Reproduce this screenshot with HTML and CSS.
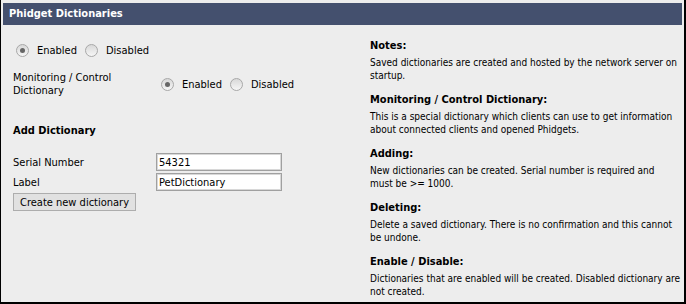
FILE: index.html
```html
<!DOCTYPE html>
<html lang="en">
<head>
    <meta charset="UTF-8">
    <title>Phidget Dictionaries</title>
    <link rel="stylesheet" href="styles.css">
</head>
<body>
    <div class="panel">
        <div class="panel-title">Phidget Dictionaries</div>
        <div class="panel-body">
            <div class="left">
                <div class="radio-row">
                    <label><input type="radio" name="enabled" checked> Enabled</label>
                    <label><input type="radio" name="enabled"> Disabled</label>
                </div>
                <div class="setting">
                    <div class="setting-label">Monitoring / Control Dictionary</div>
                    <div class="radio-row">
                        <label><input type="radio" name="monitor" checked> Enabled</label>
                        <label><input type="radio" name="monitor"> Disabled</label>
                    </div>
                </div>

                <h3>Add Dictionary</h3>
                <form id="addForm">
                    <div class="field">
                        <label for="serial">Serial Number</label>
                        <input type="text" id="serial" value="54321">
                    </div>
                    <div class="field">
                        <label for="label">Label</label>
                        <input type="text" id="label" value="PetDictionary">
                    </div>
                    <button type="submit">Create new dictionary</button>
                </form>
            </div>
            <div class="notes">
                <div class="note">
                    <h4>Notes:</h4>
                    <p>Saved dictionaries are created and hosted by the network server on startup.</p>
                </div>
                <div class="note">
                    <h4>Monitoring / Control Dictionary:</h4>
                    <p>This is a special dictionary which clients can use to get information about connected clients and opened Phidgets.</p>
                </div>
                <div class="note">
                    <h4>Adding:</h4>
                    <p>New dictionaries can be created. Serial number is required and <span class="keep">must be</span> &gt;= 1000.</p>
                </div>
                <div class="note">
                    <h4>Deleting:</h4>
                    <p>Delete a saved dictionary. There is no confirmation and this cannot be undone.</p>
                </div>
                <div class="note">
                    <h4>Enable / Disable:</h4>
                    <p>Dictionaries that are enabled will be created. Disabled dictionary are not created.</p>
                </div>
            </div>
        </div>
    </div>
</body>
</html>
```

FILE: styles.css
```css
body {
    margin: 0;
    font-family: "DejaVu Sans Condensed", "DejaVu Sans", sans-serif;
    color: #000;
    background: #fff;
}
.panel {
    width: 686px;
    height: 304px;
    box-sizing: border-box;
    background: #ededed;
    border: 2px solid #000;
    border-top: none;
    border-left-width: 1px;
    padding: 3px 2px 0 2px;
    overflow: hidden;
}
.panel-title {
    background: #44506e;
    color: #fff;
    font-weight: bold;
    font-size: 11px;
    height: 22px;
    line-height: 22px;
    padding-left: 6px;
}
.panel-body {
    display: flex;
}
.left {
    width: 367px;
    padding-left: 10px;
    box-sizing: border-box;
    font-size: 11px;
}
.radio-row {
    display: flex;
    align-items: center;
    gap: 8px;
}
.radio-row label {
    display: flex;
    align-items: center;
}
.left > .radio-row {
    margin-top: 19px;
    margin-left: 3px;
}
input[type="radio"] {
    appearance: none;
    width: 13px;
    height: 13px;
    margin: 0 8px 0 0;
    border: 1px solid #a8a8a8;
    border-radius: 50%;
    background: linear-gradient(#d8d8d8, #f6f6f6);
    position: relative;
}
input[type="radio"]:checked::after {
    content: "";
    position: absolute;
    left: 3px;
    top: 3px;
    width: 5px;
    height: 5px;
    border-radius: 50%;
    background: #666;
}
.setting {
    display: flex;
    align-items: center;
    margin-top: 14px;
}
.setting-label {
    width: 148px;
    line-height: 13px;
}
h3 {
    font-size: 11px;
    margin: 27px 0 16px;
}
.field {
    display: flex;
    align-items: center;
    margin-bottom: 2px;
}
.field label {
    width: 143px;
}
input[type="text"] {
    width: 126px;
    height: 18px;
    box-sizing: border-box;
    border: 1px solid #a0a0a0;
    box-shadow: inset 0 0 0 1px #d8d8d8;
    padding: 1px 2px;
    font: inherit;
    font-size: 11px;
}
button {
    font: inherit;
    font-size: 11px;
    height: 18px;
    padding: 0 6px;
    background: #e1e1e1;
    border: 1px solid #adadad;
}
.notes {
    width: 311px;
    padding-top: 13px;
}
.note {
    margin-bottom: 10px;
}
h4 {
    font-size: 11px;
    line-height: 16px;
    margin: 0;
}
.note p {
    font-size: 10px;
    line-height: 13px;
    margin: 2px 0 0;
}
.keep {
    white-space: nowrap;
}
```
